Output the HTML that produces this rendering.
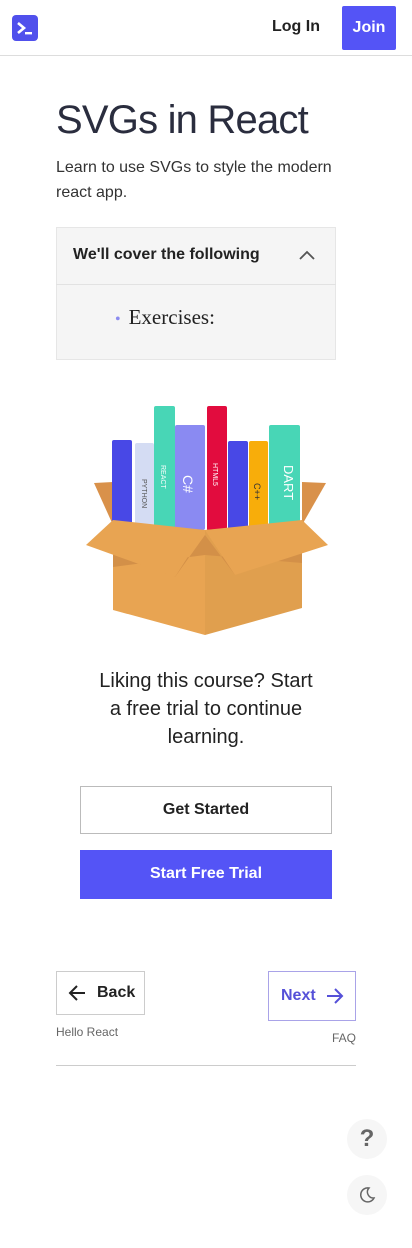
<!DOCTYPE html>
<html><head><meta charset="utf-8"><style>
*{margin:0;padding:0;box-sizing:border-box}
body{width:412px;height:1248px;background:#fff;font-family:"Liberation Sans",sans-serif;color:#2d2d3a;position:relative;overflow:hidden}
.abs{position:absolute}
</style></head><body>
<div class="abs" style="left:0;top:0;width:412px;height:56px;border-bottom:1px solid #ddd"></div>
<svg class="abs" style="left:12px;top:15px" width="26" height="26" viewBox="0 0 26 26"><rect width="26" height="26" rx="4" fill="#5050ec"/><path d="M6 8l6 5-6 5" stroke="#fff" stroke-width="2.6" fill="none"/><rect x="13" y="17" width="7" height="2.4" fill="#fff"/></svg>
<div class="abs" style="left:272px;top:18px;font-size:16px;font-weight:bold;color:#222">Log In</div>
<div class="abs" style="left:342px;top:6px;width:54px;height:44px;background:#5454f6;border-radius:2px;color:#fff;font-weight:bold;font-size:16px;line-height:43px;text-align:center">Join</div>
<div class="abs" style="left:56px;top:98px;font-size:40px;color:#2a2d3e;letter-spacing:-0.8px">SVGs in React</div>
<div class="abs" style="left:56px;top:155px;width:290px;font-size:16px;line-height:25px;color:#333">Learn to use SVGs to style the modern react app.</div>
<div class="abs" style="left:56px;top:227px;width:280px;height:133px;background:#f5f5f5;border:1px solid #e6e6e6"></div>
<div class="abs" style="left:56px;top:284px;width:280px;height:1px;background:#e2e2e2"></div>
<div class="abs" style="left:73px;top:246px;font-size:16px;font-weight:bold;color:#222">We'll cover the following</div>
<svg class="abs" style="left:298px;top:249px" width="18" height="12"><path d="M2 10l7-7 7 7" stroke="#555" stroke-width="1.8" fill="none"/></svg>
<div class="abs" style="left:115px;top:305px;font-family:'Liberation Serif',serif;font-size:21px;color:#222"><span style="color:#8b8bf0;font-size:16px;margin-right:8px">•</span>Exercises:</div>
<svg class="abs" style="left:80px;top:395px" width="250" height="245" viewBox="0 0 250 245">
<path d="M33 87L14 88L33 130Z" fill="#d9914a"/><path d="M222 87L246 88L222 130Z" fill="#d9914a"/>
<rect x="32" y="45" width="20" height="90" rx="2" fill="#4848e6"/>
<rect x="55" y="48" width="19" height="90" rx="2" fill="#d4dcf3"/>
<rect x="74" y="11" width="21" height="125" rx="2" fill="#48d6b6"/>
<rect x="95" y="30" width="30" height="105" rx="2" fill="#8a8af2"/>
<rect x="127" y="11" width="20" height="125" rx="2" fill="#e20c3e"/>
<rect x="148" y="46" width="20" height="90" rx="2" fill="#4848e6"/>
<rect x="169" y="46" width="19" height="90" rx="2" fill="#f8ad0a"/>
<rect x="189" y="30" width="31" height="100" rx="2" fill="#48d6b6"/>
<g font-size="9" fill="#fff" font-family="Liberation Sans">
<text transform="translate(204,70) rotate(90)" font-size="13">DART</text>
<text transform="translate(103,80) rotate(90)" font-size="14">C#</text>
<text transform="translate(133,68) rotate(90)" font-size="7">HTML5</text>
<text transform="translate(174,88) rotate(90)" fill="#333">C++</text>
<text transform="translate(62,84) rotate(90)" font-size="7" fill="#555">PYTHON</text>
<text transform="translate(81,70) rotate(90)" font-size="7">REACT</text>
</g>
<path d="M33 128L125 135L125 240L33 215Z" fill="#e8a452"/>
<path d="M125 135L222 128L222 213L125 240Z" fill="#e09f4e"/>
<path d="M33 152L95 182L125 140L125 160L33 172Z" fill="#d39048"/>
<path d="M125 140L155 180L222 152L222 168L125 160Z" fill="#d39048"/>
<path d="M6 150L33 125L125 135L95 182Z" fill="#e8a452"/>
<path d="M125 135L222 125L248 150L155 180Z" fill="#e8a452"/>
</svg>
<div class="abs" style="left:91px;top:667px;width:230px;text-align:center;font-size:20px;line-height:28px;color:#222">Liking this course? Start a free trial to continue learning.</div>
<div class="abs" style="left:80px;top:786px;width:252px;height:48px;border:1px solid #bbb;text-align:center;line-height:46px;font-weight:bold;font-size:16px;color:#222">Get Started</div>
<div class="abs" style="left:80px;top:850px;width:252px;height:49px;background:#5454f6;text-align:center;line-height:48px;font-weight:bold;font-size:16px;color:#fff">Start Free Trial</div>
<div class="abs" style="left:56px;top:971px;width:89px;height:44px;border:1px solid #ccc"></div>
<svg class="abs" style="left:67px;top:983px" width="20" height="20"><path d="M18 10H3M10 3L3 10l7 7" stroke="#222" stroke-width="2" fill="none"/></svg>
<div class="abs" style="left:97px;top:984px;font-size:16px;font-weight:bold;color:#222">Back</div>
<div class="abs" style="left:268px;top:971px;width:88px;height:50px;border:1px solid #a9a3e8"></div>
<div class="abs" style="left:281px;top:987px;font-size:16px;font-weight:bold;color:#5550d8">Next</div>
<svg class="abs" style="left:325px;top:986px" width="20" height="20"><path d="M2 10h15M10 3l7 7-7 7" stroke="#5550d8" stroke-width="2" fill="none"/></svg>
<div class="abs" style="left:56px;top:1025px;font-size:12px;color:#666">Hello React</div>
<div class="abs" style="left:332px;top:1031px;font-size:12px;color:#666">FAQ</div>
<div class="abs" style="left:56px;top:1065px;width:300px;height:1px;background:#ccc"></div>
<div class="abs" style="left:347px;top:1119px;width:40px;height:40px;border-radius:50%;background:#f6f6f6;text-align:center;line-height:40px;font-size:24px;font-weight:bold;color:#666">?</div>
<div class="abs" style="left:347px;top:1175px;width:40px;height:40px;border-radius:50%;background:#f6f6f6"></div>
<svg class="abs" style="left:358px;top:1186px" width="18" height="18"><path d="M11 2A7 7 0 1 0 16 12A6 6 0 0 1 11 2Z" stroke="#666" stroke-width="1.5" fill="none"/></svg>
</body></html>
